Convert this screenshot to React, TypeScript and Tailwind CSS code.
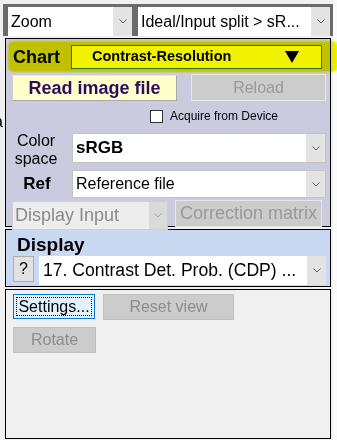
import React from "react";

const Chevron = ({ color = "#606060" }: { color?: string }) => (
  <svg width="8" height="5" viewBox="0 0 8 5">
    <path d="M0.5 0.5 L4 4 L7.5 0.5" fill="none" stroke={color} strokeWidth="1" />
  </svg>
);

function Select({
  w,
  h,
  text,
  textClass,
  bordered = false,
}: {
  w: string;
  h: string;
  text: string;
  textClass: string;
  bordered?: boolean;
}) {
  return (
    <div className={`${w} ${h} flex bg-white ${bordered ? "border border-[#c4c4c4]" : ""}`}>
      <div className={`flex-1 flex items-center whitespace-nowrap overflow-hidden ${textClass}`}>{text}</div>
      <div className="w-[19px] bg-[#e3e3e3] flex items-center justify-center">
        <Chevron />
      </div>
    </div>
  );
}

export default function App() {
  return (
    <div
      className="relative w-[337px] h-[440px] bg-[#f0f0f0] overflow-hidden flex text-black"
      style={{ fontFamily: '"Liberation Sans", Arial, sans-serif' }}
    >
      <span className="absolute left-[-6px] top-[114px] text-[16px] leading-[16px]">a</span>
      <div className="w-[333px] flex flex-col">
        {/* Top frame */}
        <div className="mt-[4px] ml-[3px] w-[330px] h-[32px] bg-[#6b6b6b] flex items-start pt-[3px] pl-[5px] gap-[6px]">
          <Select w="w-[124px]" h="h-[29px]" text="Zoom" textClass="pl-[3px] text-[16px]" />
          <Select w="w-[192px]" h="h-[29px]" text="Ideal/Input split > sR..." textClass="pl-[3px] text-[16px]" />
        </div>

        {/* Chart panel */}
        <div className="relative mt-[2px] ml-[5px] w-[326px] h-[189px] border border-black bg-[#cbcbdf] flex flex-col">
          <div className="mt-[6px] h-[24px] flex items-center">
            <div className="pl-[7px] w-[65px] text-[18px] font-bold leading-[24px]">Chart</div>
            <div className="w-[251px] h-[24px] border border-[#2f7d2f] bg-white flex items-center pl-[20px] pr-[22px]">
              <span className="text-[14.5px] font-bold whitespace-nowrap">Contrast-Resolution</span>
              <svg className="ml-auto" width="14" height="12" viewBox="0 0 14 12">
                <polygon points="0,0 14,0 7,12" fill="#000" />
              </svg>
            </div>
          </div>
          <div className="mt-[5px] flex items-start">
            <div className="ml-[6px] mt-[1px] w-[165px] h-[26px] bg-[#ffffcc] border border-[#a9a9a9] border-t-[#e8e8e8] border-l-[#d0d0d0] flex items-center justify-center text-[18px] font-bold text-[#2d0c60]">
              Read image file
            </div>
            <div className="ml-[14px] w-[135px] h-[27px] bg-[#cccccc] border border-[#e6e6e6] flex items-center justify-center text-[16px] text-[#999999]">
              Reload
            </div>
          </div>
          <div className="mt-[9px] h-[13px] flex items-center">
            <div className="ml-[144px] w-[13px] h-[13px] bg-white border border-[#333333]" />
            <span className="ml-[7px] text-[12px] leading-[13px]">Acquire from Device</span>
          </div>
          <div className="mt-[10px] flex items-start">
            <div className="w-[66px] pr-[6px] text-center text-[16px] leading-[18px] -mt-[1px]">
              Color
              <br />
              space
            </div>
            <Select w="w-[254px]" h="h-[30px]" text="sRGB" textClass="pl-[3px] text-[17px] font-bold" bordered />
          </div>
          <div className="mt-[2px] flex items-center">
            <div className="w-[66px] pr-[4px] text-center text-[17px] font-bold">Ref</div>
            <Select w="w-[254px]" h="h-[28px]" text="Reference file" textClass="pl-[3px] text-[16px]" bordered />
          </div>
          <div className="mt-[3px] flex items-start">
            <div className="ml-[6px] w-[156px] h-[29px] flex bg-[#ededed] border border-[#cfcfcf]">
              <div className="flex-1 flex items-center pl-[2px] text-[18px] text-[#8a8a8a] whitespace-nowrap">Display Input</div>
              <div className="w-[18px] bg-[#dadada] flex items-center justify-center">
                <Chevron color="#a8a8a8" />
              </div>
            </div>
            <div className="ml-[7px] -mt-[1px] w-[147px] h-[27px] bg-[#cccccc] border border-[#e6e6e6] flex items-center justify-center text-[18px] text-[#999999] whitespace-nowrap">
              Correction matrix
            </div>
          </div>
        </div>

        {/* Display panel */}
        <div className="mt-[2px] ml-[5px] w-[326px] h-[58px] border border-black bg-[#c9d9f2] flex flex-col">
          <div className="mt-[4px] h-[22px] pl-[11px] text-[19px] leading-[22px] font-bold">Display</div>
          <div className="flex items-start">
            <div className="ml-[7px] w-[21px] h-[26px] bg-[#e1e1e1] border border-[#adadad] flex items-center justify-center text-[16px]">
              ?
            </div>
            <Select
              w="w-[287px] ml-[5px]"
              h="h-[29px]"
              text="17. Contrast Det. Prob. (CDP) ..."
              textClass="pl-[4px] text-[17.6px]"
            />
          </div>
        </div>

        {/* Bottom panel */}
        <div className="mt-[2px] ml-[5px] w-[326px] h-[150px] border border-black bg-[#f0f0f0] flex flex-col">
          <div className="mt-[4px] flex items-start">
            <div className="ml-[7px] w-[82px] h-[25px] bg-[#e5f1fb] border border-[#0078d7] p-[2px]">
              <div className="w-full h-full border border-dotted border-black flex items-center justify-center text-[16px] whitespace-nowrap">
                Settings...
              </div>
            </div>
            <div className="ml-[8px] w-[131px] h-[26px] bg-[#cccccc] border border-[#bfbfbf] flex items-center justify-center text-[16px] text-[#8d8d8d]">
              Reset view
            </div>
          </div>
          <div className="mt-[7px] ml-[7px] w-[83px] h-[26px] bg-[#cccccc] border border-[#bfbfbf] flex items-center justify-center text-[16px] text-[#8d8d8d]">
            Rotate
          </div>
        </div>
      </div>
      <div className="flex-1 bg-[#fafafa]" />

      {/* Yellow highlighter annotation */}
      <div className="absolute left-[8px] top-[41px] w-[330px] h-[31px] rounded-[5px] bg-[#f0f200] mix-blend-multiply blur-[1px] pointer-events-none" />
    </div>
  );
}
